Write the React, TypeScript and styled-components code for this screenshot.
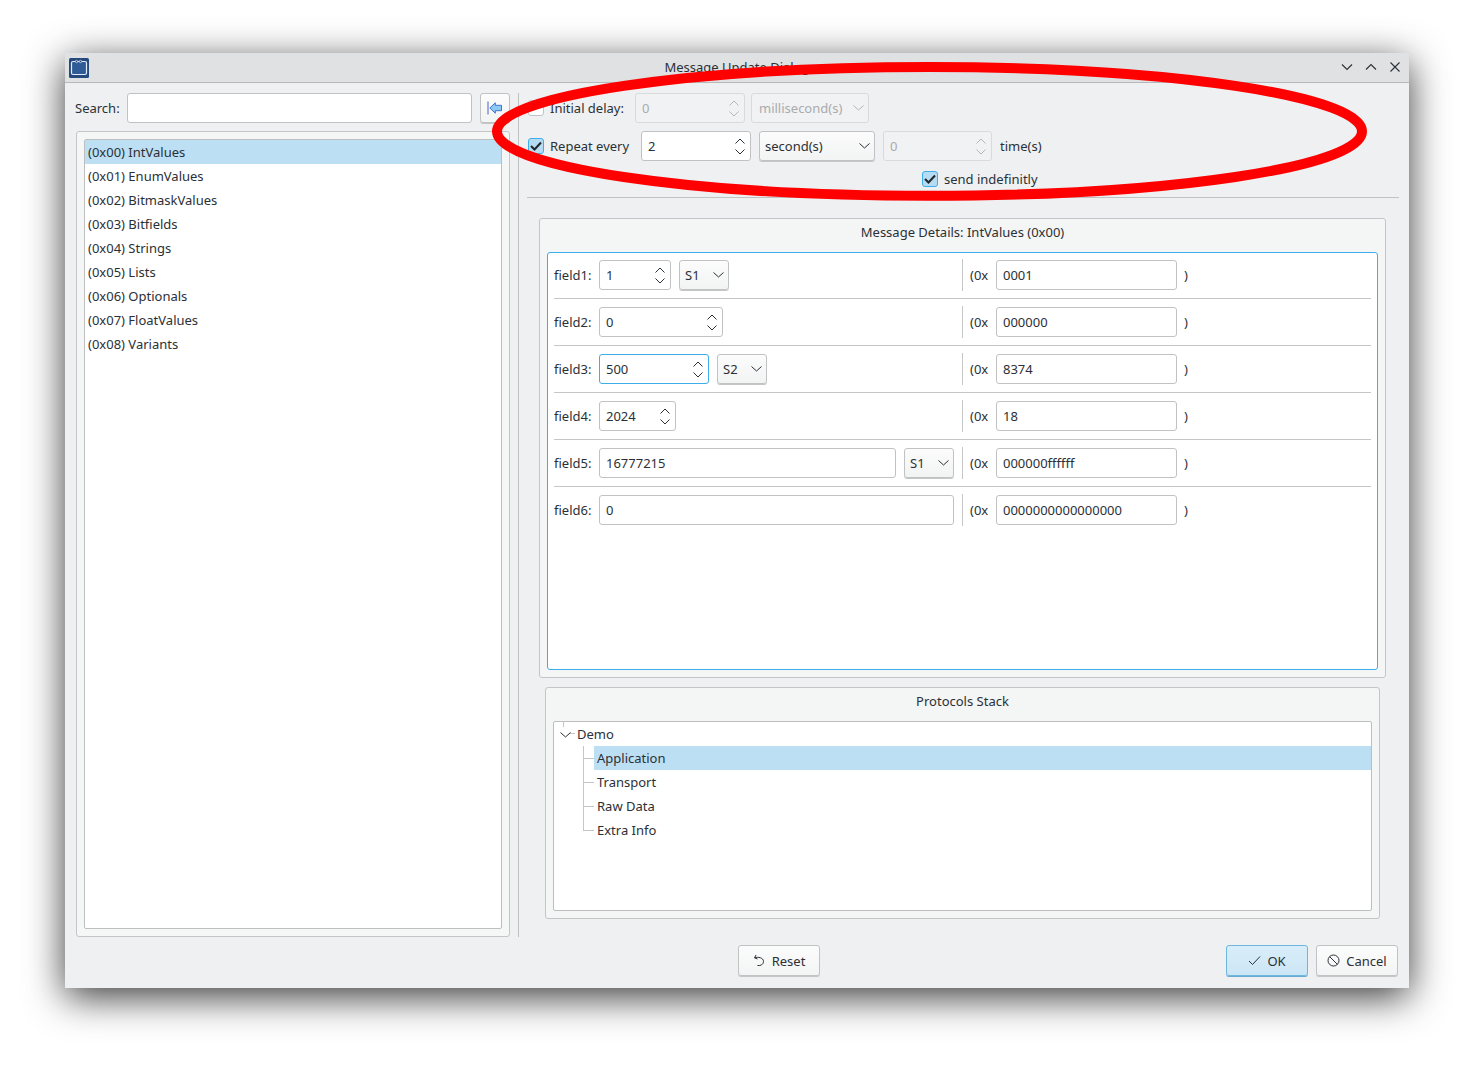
import React from "react";
import styled, { createGlobalStyle, css } from "styled-components";

const Global = createGlobalStyle`
  html, body { margin: 0; padding: 0; background: #fff; }
  body { font-family: "Noto Sans", sans-serif; font-size: 13px; color: #2b3036; overflow: hidden; }
  * { box-sizing: border-box; }
`;

const Page = styled.div`
  position: relative;
  width: 1474px;
  height: 1065px;
  padding: 53px 65px 0;
  overflow: hidden;
`;
const Win = styled.div`
  width: 1344px;
  height: 935px;
  display: flex;
  flex-direction: column;
  background: #eff0f2;
  border-radius: 4px 4px 0 0;
  box-shadow: 0 9px 38px rgba(0, 0, 0, 0.78);
`;
const TitleBar = styled.header`
  position: relative;
  height: 30px;
  flex: none;
  display: flex;
  align-items: center;
  justify-content: space-between;
  padding: 0 6px 0 4px;
  background: #dfe1e3;
  border-bottom: 1px solid #b6b8ba;
  border-radius: 4px 4px 0 0;
`;
const Title = styled.div`
  position: absolute;
  left: 0;
  right: 0;
  top: 4px;
  text-align: center;
  line-height: 20px;
`;
const WinButtons = styled.div`
  display: flex;
  gap: 8px;
  align-items: center;
  margin-top: -1px;
`;
const Body = styled.div`
  display: flex;
  height: 844px;
  margin-top: 10px;
  flex: none;
`;
const LeftPane = styled.section`
  width: 435px;
  margin-left: 10px;
  display: flex;
  flex-direction: column;
  gap: 8px;
  flex: none;
`;
const SearchRow = styled.div`
  display: flex;
  align-items: center;
  height: 30px;
  gap: 8px;
`;
const SearchLabel = styled.label`
  width: 44px;
  white-space: nowrap;
`;
const IconButton = styled.button`
  width: 30px;
  height: 30px;
  padding: 0;
  display: flex;
  align-items: center;
  justify-content: center;
  border: 1px solid #c0c2c4;
  border-radius: 3px;
  background: linear-gradient(#fcfcfc, #f3f4f4);
  box-shadow: 0 1px 0 #c4c6c8;
`;
const ListFrame = styled.div`
  flex: 1;
  margin-left: 1px;
  padding: 7px;
  border: 1px solid #c3c5c6;
  border-radius: 3px;
  background: #f5f6f6;
  display: flex;
`;
const List = styled.ul`
  flex: 1;
  margin: 0;
  padding: 0;
  list-style: none;
  background: #fff;
  border: 1px solid #bcbec0;
  border-radius: 2px;
`;
const ListItem = styled.li<{ $sel?: boolean }>`
  height: 24px;
  line-height: 24px;
  padding-left: 3px;
  background: ${(p) => (p.$sel ? "#bddff4" : "transparent")};
`;
const Split = styled.div`
  width: 1px;
  margin: 0 8px;
  background: #c0c2c4;
  flex: none;
`;
const RightPane = styled.section`
  width: 872px;
  flex: none;
  display: flex;
  flex-direction: column;
`;
const Schedule = styled.div`
  display: flex;
  flex-direction: column;
  gap: 8px;
  padding-left: 1px;
`;
const SchedRow = styled.div`
  display: flex;
  align-items: center;
  height: 30px;
`;
const SendRow = styled.div`
  display: flex;
  align-items: center;
  height: 18px;
  margin-top: 1px;
  padding-left: 394px;
  gap: 6px;
`;
const Check = styled.span<{ $on?: boolean }>`
  width: 16px;
  height: 16px;
  flex: none;
  display: flex;
  align-items: center;
  justify-content: center;
  border-radius: 3px;
  border: 1px solid ${(p) => (p.$on ? "#3daee9" : "#c0c2c4")};
  background: ${(p) => (p.$on ? "#b5dcf3" : "#fff")};
`;
const CheckLabel = styled.span<{ $w: number }>`
  width: ${(p) => p.$w}px;
  padding-left: 6px;
  white-space: nowrap;
`;
const HLine = styled.div`
  height: 1px;
  margin-top: 9px;
  background: #c0c2c4;
  flex: none;
`;
const boxBase = css`
  height: 30px;
  flex: none;
  position: relative;
  display: flex;
  align-items: center;
  border-radius: 3px;
  white-space: nowrap;
`;
const Spin = styled.div<{ $w: number; $focus?: boolean; $off?: boolean; $ml?: number }>`
  ${boxBase}
  width: ${(p) => p.$w}px;
  margin-left: ${(p) => p.$ml ?? 0}px;
  padding: 0 6px;
  background: ${(p) => (p.$off ? "#f1f2f3" : "#fff")};
  color: ${(p) => (p.$off ? "#a9abae" : "#2b3036")};
  border: 1px solid ${(p) => (p.$focus ? "#3daee9" : p.$off ? "#d8dadb" : "#c0c2c4")};
`;
const SpinArrows = styled.span`
  position: absolute;
  right: 5px;
  top: 6px;
  display: flex;
  flex-direction: column;
  gap: 5px;
`;
const Combo = styled.div<{ $w: number; $off?: boolean; $ml?: number }>`
  ${boxBase}
  width: ${(p) => p.$w}px;
  margin-left: ${(p) => p.$ml ?? 0}px;
  padding: 0 4px 0 ${(p) => (p.$off ? 7 : 5)}px;
  justify-content: space-between;
  color: ${(p) => (p.$off ? "#a9abae" : "#2b3036")};
  border: 1px solid ${(p) => (p.$off ? "#d8dadb" : "#c0c2c4")};
  background: ${(p) => (p.$off ? "#f1f2f3" : "linear-gradient(#fcfcfc, #f2f3f3)")};
  box-shadow: ${(p) => (p.$off ? "none" : "0 1px 0 #c4c6c8")};
`;
const TextBox = styled.div<{ $w: number }>`
  ${boxBase}
  width: ${(p) => p.$w}px;
  padding: 0 6px;
  background: #fff;
  border: 1px solid #c0c2c4;
`;
const TimesLabel = styled.span`
  margin-left: 8px;
`;
const Group = styled.section<{ $h: number; $ml: number; $mt: number; $w: number }>`
  height: ${(p) => p.$h}px;
  width: ${(p) => p.$w}px;
  margin: ${(p) => p.$mt}px 0 0 ${(p) => p.$ml}px;
  flex: none;
  display: flex;
  flex-direction: column;
  padding: 0 7px 7px;
  border: 1px solid #c3c5c6;
  border-radius: 3px;
  background: #f4f5f5;
`;
const GroupTitle = styled.div`
  height: 26px;
  line-height: 27px;
  margin-bottom: 7px;
  flex: none;
  text-align: center;
`;
const FieldsPanel = styled.div`
  flex: 1;
  padding: 7px 6px 0;
  background: #fff;
  border: 1px solid #3daee9;
  border-radius: 3px;
`;
const FieldRow = styled.div<{ $last?: boolean }>`
  display: grid;
  grid-template-columns: 408px 1px 1fr;
  height: ${(p) => (p.$last ? 30 : 39)}px;
  padding-bottom: ${(p) => (p.$last ? 0 : 8)}px;
  margin-bottom: 8px;
  border-bottom: ${(p) => (p.$last ? "none" : "1px solid #c4c6c8")};
`;
const FieldLeft = styled.div`
  display: flex;
  align-items: center;
  gap: 8px;
`;
const FieldName = styled.span`
  width: 37px;
  white-space: nowrap;
`;
const VLine = styled.div`
  background: #c4c6c8;
  margin: -1px 0;
`;
const FieldRight = styled.div`
  display: flex;
  align-items: center;
  padding-left: 7px;
`;
const Prefix = styled.span`
  width: 26px;
`;
const Suffix = styled.span`
  margin-left: 7px;
`;
const Tree = styled.div`
  flex: 1;
  position: relative;
  background: #fff;
  border: 1px solid #bcbec0;
  border-radius: 2px;
`;
const RootRow = styled.div`
  position: relative;
  height: 24px;
  line-height: 24px;
  padding-left: 23px;
`;
const RootStub = styled.span`
  position: absolute;
  left: 9px;
  top: 0;
  width: 1px;
  height: 5px;
  background: #c4c6c8;
`;
const RootDash = styled.span`
  position: absolute;
  left: 16px;
  top: 11px;
  width: 5px;
  height: 1px;
  background: #c4c6c8;
`;
const RootArrow = styled.span`
  position: absolute;
  left: 6px;
  top: 10px;
  display: flex;
`;
const TreeRow = styled.div`
  height: 24px;
  display: flex;
  line-height: 24px;
  padding-left: 29px;
`;
const Branch = styled.span<{ $last?: boolean }>`
  position: relative;
  width: 11px;
  flex: none;
  &::before {
    content: "";
    position: absolute;
    left: 0;
    top: 0;
    width: 1px;
    height: ${(p) => (p.$last ? "13px" : "24px")};
    background: #c4c6c8;
  }
  &::after {
    content: "";
    position: absolute;
    left: 0;
    top: 12px;
    width: 11px;
    height: 1px;
    background: #c4c6c8;
  }
`;
const TreeText = styled.span<{ $sel?: boolean }>`
  flex: 1;
  padding-left: 3px;
  background: ${(p) => (p.$sel ? "#bddff4" : "transparent")};
`;
const Footer = styled.footer`
  display: flex;
  align-items: flex-start;
  margin-top: 8px;
  padding: 0 11px 0 673px;
  gap: 8px;
`;
const PushBtn = styled.button<{ $primary?: boolean; $ml?: number }>`
  width: 82px;
  height: 31px;
  padding: 0;
  display: flex;
  align-items: center;
  justify-content: center;
  gap: 6px;
  font: inherit;
  color: #2b3036;
  margin-left: ${(p) => p.$ml ?? 0}px;
  border: 1px solid ${(p) => (p.$primary ? "#6fb6de" : "#c0c2c4")};
  border-radius: 3px;
  background: ${(p) =>
    p.$primary ? "linear-gradient(#d8edf9, #cde6f5)" : "linear-gradient(#fcfcfc, #f3f4f4)"};
  box-shadow: 0 1px 0 ${(p) => (p.$primary ? "#6aa9cf" : "#c4c6c8")};
`;
const Overlay = styled.svg`
  position: absolute;
  left: 0;
  top: 0;
  pointer-events: none;
`;

const Chevron = ({ up, w = 10, color = "#2b3036" }: { up?: boolean; w?: number; color?: string }) => (
  <svg width={w} height={6} viewBox={`0 0 ${w} 6`} fill="none" stroke={color} strokeWidth="1">
    <path d={up ? `M0.5 5.5 L${w / 2} 1 L${w - 0.5} 5.5` : `M0.5 0.5 L${w / 2} 5 L${w - 0.5} 0.5`} />
  </svg>
);

const Arrows = ({ off }: { off?: boolean }) => (
  <SpinArrows>
    <Chevron up w={10} color={off ? "#b4b6b9" : "#2b3036"} />
    <Chevron w={10} color={off ? "#b4b6b9" : "#2b3036"} />
  </SpinArrows>
);

const Tick = () => (
  <svg width="12" height="10" viewBox="0 0 12 10" fill="none" stroke="#232629" strokeWidth="2">
    <path d="M1 5 L4.5 8.5 L11 1.5" />
  </svg>
);

const fields = [
  { name: "field1:", spin: 72, val: "1", combo: "S1", hex: "0001" },
  { name: "field2:", spin: 124, val: "0", hex: "000000" },
  { name: "field3:", spin: 110, val: "500", combo: "S2", hex: "8374", focus: true },
  { name: "field4:", spin: 77, val: "2024", hex: "18" },
  { name: "field5:", text: 297, val: "16777215", combo: "S1", hex: "000000ffffff" },
  { name: "field6:", text: 355, val: "0", hex: "0000000000000000" },
];

const messages = [
  "(0x00) IntValues",
  "(0x01) EnumValues",
  "(0x02) BitmaskValues",
  "(0x03) Bitfields",
  "(0x04) Strings",
  "(0x05) Lists",
  "(0x06) Optionals",
  "(0x07) FloatValues",
  "(0x08) Variants",
];

export default function App() {
  return (
    <Page>
      <Global />
      <Win>
        <TitleBar>
          <svg width="20" height="20" viewBox="0 0 20 20">
            <rect width="20" height="20" rx="1.5" fill="#25497f" />
            <rect x="2.5" y="3.5" width="15" height="13" rx="1.5" fill="#2f5a98" stroke="#e4ebf5" strokeWidth="1.2" />
            <circle cx="7.5" cy="3.5" r="1.2" fill="#25497f" stroke="#e4ebf5" strokeWidth=".7" />
            <circle cx="11.5" cy="3.5" r="1.2" fill="#25497f" stroke="#e4ebf5" strokeWidth=".7" />
          </svg>
          <Title>Message Update Dialog</Title>
          <WinButtons>
            <svg width="16" height="16" viewBox="0 0 16 16" fill="none" stroke="#2b3036" strokeWidth="1.1">
              <path d="M3 5.5 L8 10.5 L13 5.5" />
            </svg>
            <svg width="16" height="16" viewBox="0 0 16 16" fill="none" stroke="#2b3036" strokeWidth="1.1">
              <path d="M3 10.5 L8 5.5 L13 10.5" />
            </svg>
            <svg width="16" height="16" viewBox="0 0 16 16" fill="none" stroke="#2b3036" strokeWidth="1.1">
              <path d="M3.5 3.5 L12.5 12.5 M12.5 3.5 L3.5 12.5" />
            </svg>
          </WinButtons>
        </TitleBar>
        <Body>
          <LeftPane>
            <SearchRow>
              <SearchLabel>Search:</SearchLabel>
              <TextBox $w={345} />
              <IconButton>
                <svg width="16" height="16" viewBox="0 0 16 16">
                  <rect x="0.5" y="1.5" width="1" height="13" fill="#4d62c4" />
                  <path d="M2.8 8 L8.3 2.8 V5.3 H14.5 V10.7 H8.3 V13.2 Z" fill="#8cc8f4" stroke="#3f74d0" strokeWidth="1" />
                </svg>
              </IconButton>
            </SearchRow>
            <ListFrame>
              <List>
                {messages.map((m, i) => (
                  <ListItem key={m} $sel={i === 0}>
                    {m}
                  </ListItem>
                ))}
              </List>
            </ListFrame>
          </LeftPane>
          <Split />
          <RightPane>
            <Schedule>
              <SchedRow>
                <Check />
                <CheckLabel $w={91}>Initial delay:</CheckLabel>
                <Spin $w={110} $off>
                  0
                  <Arrows off />
                </Spin>
                <Combo $w={118} $off $ml={6}>
                  millisecond(s)
                  <Chevron w={11} color="#b4b6b9" />
                </Combo>
              </SchedRow>
              <SchedRow>
                <Check $on>
                  <Tick />
                </Check>
                <CheckLabel $w={97}>Repeat every</CheckLabel>
                <Spin $w={110}>
                  2
                  <Arrows />
                </Spin>
                <Combo $w={116} $ml={8}>
                  second(s)
                  <Chevron w={11} />
                </Combo>
                <Spin $w={109} $off $ml={8}>
                  0
                  <Arrows off />
                </Spin>
                <TimesLabel>time(s)</TimesLabel>
              </SchedRow>
              <SendRow>
                <Check $on>
                  <Tick />
                </Check>
                <span>send indefinitly</span>
              </SendRow>
            </Schedule>
            <HLine />
            <Group $h={460} $w={847} $ml={12} $mt={20}>
              <GroupTitle>Message Details: IntValues (0x00)</GroupTitle>
              <FieldsPanel>
                {fields.map((f, i) => (
                  <FieldRow key={f.name} $last={i === fields.length - 1}>
                    <FieldLeft>
                      <FieldName>{f.name}</FieldName>
                      {f.text ? (
                        <TextBox $w={f.text}>{f.val}</TextBox>
                      ) : (
                        <Spin $w={f.spin!} $focus={f.focus}>
                          {f.val}
                          <Arrows />
                        </Spin>
                      )}
                      {f.combo && (
                        <Combo $w={50}>
                          {f.combo}
                          <Chevron w={11} />
                        </Combo>
                      )}
                    </FieldLeft>
                    <VLine />
                    <FieldRight>
                      <Prefix>(0x</Prefix>
                      <TextBox $w={181}>{f.hex}</TextBox>
                      <Suffix>)</Suffix>
                    </FieldRight>
                  </FieldRow>
                ))}
              </FieldsPanel>
            </Group>
            <Group $h={232} $w={835} $ml={18} $mt={9}>
              <GroupTitle>Protocols Stack</GroupTitle>
              <Tree>
                <RootRow>
                  <RootStub />
                  <RootArrow>
                    <Chevron w={11} />
                  </RootArrow>
                  <RootDash />
                  Demo
                </RootRow>
                {["Application", "Transport", "Raw Data", "Extra Info"].map((t, i) => (
                  <TreeRow key={t}>
                    <Branch $last={i === 3} />
                    <TreeText $sel={i === 0}>{t}</TreeText>
                  </TreeRow>
                ))}
              </Tree>
            </Group>
          </RightPane>
        </Body>
        <Footer>
          <PushBtn>
            <svg width="13" height="13" viewBox="0 0 13 13" fill="none" stroke="#2b3036" strokeWidth="1">
              <path d="M3 1 L1.5 3.8 L4.5 5" />
              <path d="M1.8 3.8 C5 2.6 10.5 3.6 10.5 7.5 C10.5 10.5 7.5 12 4.5 11.5" />
            </svg>
            Reset
          </PushBtn>
          <PushBtn $primary $ml={398}>
            <svg width="13" height="13" viewBox="0 0 13 13" fill="none" stroke="#2b3036" strokeWidth="1">
              <path d="M1 7 L4.5 10.5 L12 2.5" />
            </svg>
            OK
          </PushBtn>
          <PushBtn>
            <svg width="13" height="13" viewBox="0 0 13 13" fill="none" stroke="#2b3036" strokeWidth="1">
              <circle cx="6.5" cy="6.5" r="5.5" />
              <path d="M2.6 2.6 L10.4 10.4" />
            </svg>
            Cancel
          </PushBtn>
        </Footer>
      </Win>
      <Overlay width="1474" height="1065" viewBox="0 0 1474 1065">
        <ellipse cx="929.5" cy="131.4" rx="432.5" ry="64.4" fill="none" stroke="#ff0000" strokeWidth="10" />
      </Overlay>
    </Page>
  );
}
